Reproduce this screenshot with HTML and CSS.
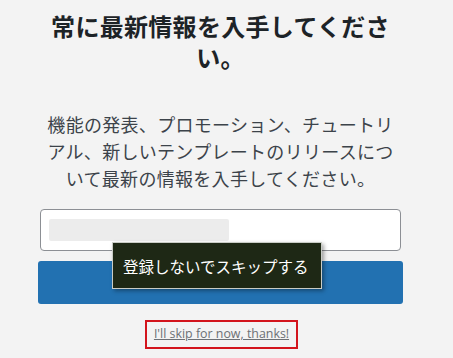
FILE: index.html
```html
<!DOCTYPE html>
<html lang="ja">

<head>
    <meta charset="utf-8">
    <title>Newsletter</title>
    <link rel="stylesheet" href="styles.css">
</head>

<body>
    <div class="panel">
        <h1 class="title">常に最新情報を入手してください。</h1>
        <p class="lead">機能の発表、プロモーション、チュートリアル、新しいテンプレートのリリースについて最新の情報を入手してください。</p>
        <div class="form">
            <div class="field">
                <div class="redacted"></div>
            </div>
            <button class="submit"></button>
            <div class="tooltip">登録しないでスキップする</div>
        </div>
        <div class="skip">
            <a href="#" class="skip-link">I'll skip for now, thanks!</a>
        </div>
    </div>
</body>

</html>
```

FILE: styles.css
```css
body {
    margin: 0;
    background-color: #f3f3f3;
    font-family: "Noto Sans CJK JP", "Noto Sans", sans-serif;
    color: #1d2327;
}

.panel {
    width: 365px;
    margin-left: 38px;
    padding-top: 10px;
}

.title {
    margin: 0 8px;
    font-size: 24px;
    font-weight: 700;
    line-height: 31px;
    letter-spacing: 0.3px;
    text-align: center;
}

.lead {
    margin: 39px 8px 0;
    font-size: 18px;
    line-height: 27px;
    letter-spacing: 0.3px;
    color: #3c434a;
    text-align: center;
}

.form {
    position: relative;
    margin-top: 17px;
}

.field {
    margin: 0 2px;
    height: 40px;
    border: 1px solid #8c8f94;
    border-radius: 4px;
    background-color: #fff;
    display: flex;
    align-items: center;
    padding-left: 8px;
}

.redacted {
    width: 180px;
    height: 22px;
    background-color: #ececec;
    border-radius: 2px;
    filter: blur(0.5px);
}

.submit {
    display: block;
    width: 100%;
    height: 43px;
    margin-top: 10px;
    border: 0;
    border-radius: 3px;
    background-color: #2271b1;
}

.tooltip {
    position: absolute;
    left: 74px;
    top: 33px;
    width: 198px;
    height: 45px;
    box-sizing: content-box;
    display: flex;
    align-items: center;
    padding-left: 10px;
    background-color: #1e2815;
    border: 1px solid #c9ccc6;
    box-shadow: 2px 2px 4px rgba(0, 0, 0, 0.35);
    color: #fff;
    font-size: 15.5px;
}

.skip {
    display: flex;
    justify-content: center;
    margin-top: 16px;
}

.skip-link {
    display: block;
    margin-left: 2px;
    padding: 4px 7px 5px;
    border: 2px solid #d3141c;
    font-family: "Open Sans", "Noto Sans", sans-serif;
    font-size: 12.4px;
    line-height: 16px;
    color: #6c7075;
}
```
